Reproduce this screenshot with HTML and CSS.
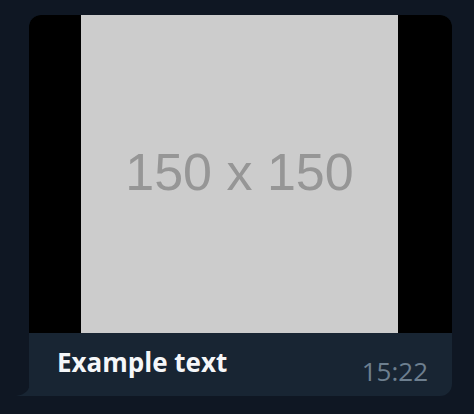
FILE: index.html
```html
<!DOCTYPE html>
<html>
<head>
<meta charset="utf-8">
<link rel="stylesheet" href="styles.css">
</head>
<body>
<div class="chat">
  <div class="bubble">
    <div class="media">
      <div class="placeholder">150 x 150</div>
    </div>
    <div class="caption">
      <span class="caption-text">Example text</span>
      <span class="time">15:22</span>
    </div>
    <svg class="tail" width="14" height="14" viewBox="0 0 14 14"><path d="M14 0 Q14 12 0 14 L14 14 Z" fill="#182533"/></svg>
  </div>
</div>
</body>
</html>
```
FILE: styles.css
```css
html, body {
  margin: 0;
  padding: 0;
  background: #0f1723;
  width: 474px;
  height: 414px;
  overflow: hidden;
}
.chat {
  padding: 15px 0 0 29px;
}
.bubble {
  position: relative;
  width: 423px;
  border-radius: 12px 12px 12px 0;
  background: #182533;
}
.media {
  background: #000;
  height: 318px;
  border-radius: 12px 12px 0 0;
  display: flex;
  justify-content: center;
  overflow: hidden;
}
.placeholder {
  width: 317px;
  height: 318px;
  margin-left: -2px;
  background: #cccccc;
  color: #969696;
  font-family: "Liberation Sans", Arial, sans-serif;
  font-size: 52px;
  line-height: 1;
  display: flex;
  align-items: center;
  justify-content: center;
  padding-bottom: 4px;
  box-sizing: border-box;
}
.caption {
  height: 63px;
  display: flex;
  justify-content: space-between;
  align-items: flex-start;
  padding: 0 24px 0 28px;
  border-radius: 0 0 12px 0;
  font-family: "Open Sans", sans-serif;
}
.caption-text {
  margin-top: 13px;
  font-size: 26px;
  line-height: 32px;
  font-weight: 700;
  color: #f5f7f9;
}
.time {
  margin-top: 22px;
  font-size: 26px;
  line-height: 32px;
  color: #6d7f8f;
}
.tail {
  position: absolute;
  left: -13px;
  bottom: 0;
}
```
